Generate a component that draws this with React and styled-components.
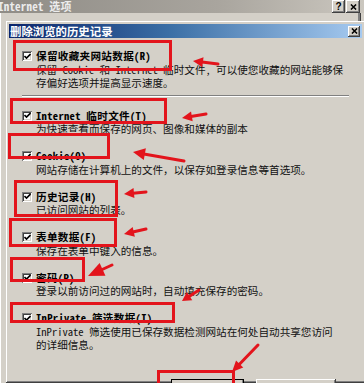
import React from 'react';
import styled, { createGlobalStyle } from 'styled-components';

const GlobalStyle = createGlobalStyle`
  html, body {
    margin: 0;
    padding: 0;
    background: #d4d0c8;
  }
  body {
    overflow: hidden;
  }
`;

const FONT = `"Noto Sans Mono CJK SC", "Noto Sans CJK SC", "Liberation Mono", monospace`;
const RED = '#e3141c';

const raised = `
  box-shadow: inset -1px -1px #404040, inset 1px 1px #ffffff,
    inset -2px -2px #808080, inset 2px 2px #d4d0c8;
`;

const Screen = styled.div`
  position: relative;
  width: 364px;
  height: 383px;
  overflow: hidden;
  background: #d4d0c8;
  display: flex;
  flex-direction: column;
  font-family: ${FONT};
  color: #000;
`;

const OuterTitle = styled.div`
  flex: 0 0 13px;
  display: flex;
  align-items: center;
  justify-content: space-between;
  padding-right: 4px;
  background: linear-gradient(to right, #8f8c86, #a9a59e 60%, #cbc7bf);
`;

const OuterTitleText = styled.span`
  margin-left: -2px;
  color: #ececec;
  font-size: 11px;
  font-weight: bold;
  line-height: 13px;
  letter-spacing: 0.2px;
  white-space: nowrap;
`;

const CaptionGroup = styled.div`
  display: flex;
  gap: 1px;
`;

const CaptionButton = styled.span`
  width: ${p => p.$w}px;
  height: ${p => p.$h}px;
  background: #d4d0c8;
  ${raised}
  display: flex;
  align-items: center;
  justify-content: center;
  font-family: "Liberation Sans", sans-serif;
  font-size: 10px;
  font-weight: bold;
  line-height: 1;
`;

const OuterBody = styled.div`
  flex: 1;
  width: 361px;
  padding: 8px 5px 0 6px;
  box-sizing: border-box;
  box-shadow: inset 1px 0 #ffffff, inset -1px 0 #404040, inset -3px 0 #808080;
  display: flex;
  min-height: 0;
`;

const Dialog = styled.div`
  flex: 1;
  display: flex;
  flex-direction: column;
  padding: 3px 5px 0 3px;
  background: #d4d0c8;
  ${raised}
`;

const DialogTitle = styled.div`
  height: 14px;
  display: flex;
  align-items: center;
  justify-content: space-between;
  padding: 0 2px 0 1px;
  background: linear-gradient(to right, #0a246a, #3a6ea5 45%, #a6caf0);
`;

const DialogTitleText = styled.span`
  color: #ffffff;
  font-size: 11.4px;
  font-weight: bold;
  line-height: 14px;
  white-space: nowrap;
`;

const Content = styled.div`
  display: flex;
  flex-direction: column;
  padding: 11px 13px 0 13px;
  font-size: 10.6px;
  line-height: 13.5px;
`;

const Item = styled.div`
  display: grid;
  grid-template-columns: 10px 1fr;
  column-gap: 4px;
  margin-bottom: ${p => p.$gap}px;
`;

const Check = styled.span`
  width: 10px;
  height: 10px;
  margin-top: 2px;
  background: #ffffff;
  box-shadow: inset 1px 1px #808080, inset -1px -1px #ffffff,
    inset 2px 2px #404040, inset -2px -2px #d4d0c8;
  display: flex;
  align-items: center;
  justify-content: center;
`;

const Label = styled.span`
  font-weight: bold;
  white-space: nowrap;
  letter-spacing: 0.3px;
`;

const Desc = styled.span`
  grid-column: 2;
  white-space: nowrap;
  color: #111;
`;

const Separator = styled.div`
  height: 0;
  margin: 5px 0 12px 0;
  border-top: 1px solid #808080;
  border-bottom: 1px solid #ffffff;
  width: 327px;
`;

const ButtonRow = styled.div`
  display: flex;
  justify-content: flex-end;
  gap: 12px;
  padding-right: 13px;
  margin-top: ${p => p.$top}px;
`;

const Button = styled.div`
  width: ${p => p.$w}px;
  height: 23px;
  box-sizing: border-box;
  padding-top: 4px;
  text-align: center;
  font-size: 10.6px;
  background: #d4d0c8;
  ${raised}
  ${p => p.$default && `outline: 1px solid #000; outline-offset: -1px;`}
`;

const Overlay = styled.svg`
  position: absolute;
  left: 0;
  top: 0;
  pointer-events: none;
`;

const items = [
  {
    label: '保留收藏夹网站数据(R)',
    lines: ['保留 Cookie 和 Internet 临时文件, 可以使您收藏的网站能够保', '存偏好选项并提高显示速度。'],
    sep: true,
  },
  { label: 'Internet 临时文件(T)', lines: ['为快速查看而保存的网页、图像和媒体的副本'] },
  { label: 'Cookie(O)', lines: ['网站存储在计算机上的文件，以保存如登录信息等首选项。'] },
  { label: '历史记录(H)', lines: ['已访问网站的列表。'] },
  { label: '表单数据(F)', lines: ['保存在表单中键入的信息。'] },
  { label: '密码(P)', lines: ['登录以前访问过的网站时，自动填充保存的密码。'] },
  { label: 'InPrivate 筛选数据(I)', lines: ['InPrivate 筛选使用已保存数据检测网站在何处自动共享您访问', '的详细信息。'] },
];

// red annotation boxes, page coords of the stroke centre
const marks = [
  [14.5, 41.5, 156, 28],
  [11.5, 99.5, 154, 23],
  [9.5, 134.5, 99, 23],
  [15.5, 181.5, 101, 34],
  [10.5, 219.5, 105, 26],
  [11.5, 258.5, 72, 22],
  [11.5, 303.5, 162, 18],
  [158.5, 371.5, 75, 20],
];

// [tail, head, head length, head half width]
const arrows = [
  [[218, 64], [193, 61], 10, 5],
  [[206, 114], [182, 118], 10, 5],
  [[184, 161], [133, 152], 12, 6],
  [[146, 192], [124, 194], 10, 5],
  [[146, 229], [124, 234], 10, 5],
  [[112, 265], [88, 276], 16, 7],
  [[199, 290], [182, 301], 9, 5],
  [[258, 345], [232, 372], 11, 5],
];

function Tick() {
  return (
    <svg width="7" height="7" viewBox="0 0 7 7">
      <path d="M0.5 3 L2.5 5 L6.5 1" fill="none" stroke="#000" strokeWidth="1.6" />
    </svg>
  );
}

function Cross({ size = 7 }) {
  return (
    <svg width={size} height={size - 1} viewBox="0 0 8 7">
      <path d="M1 0.5 L7 6.5 M7 0.5 L1 6.5" stroke="#000" strokeWidth="1.7" />
    </svg>
  );
}

function Arrow({ from, to, len, wide }) {
  const [x1, y1] = from;
  const [x2, y2] = to;
  const d = Math.hypot(x2 - x1, y2 - y1);
  const ux = (x2 - x1) / d;
  const uy = (y2 - y1) / d;
  const bx = x2 - ux * len;
  const by = y2 - uy * len;
  const px = -uy;
  const py = ux;
  const pts = `${x2},${y2} ${bx + px * wide},${by + py * wide} ${bx - px * wide},${by - py * wide}`;
  return (
    <g>
      <line x1={x1} y1={y1} x2={bx + ux} y2={by + uy} stroke={RED} strokeWidth="3" strokeLinecap="round" />
      <polygon points={pts} fill={RED} />
    </g>
  );
}

export default function App() {
  return (
    <Screen>
      <GlobalStyle />
      <OuterTitle>
        <OuterTitleText>Internet 选项</OuterTitleText>
        <CaptionGroup>
          <CaptionButton $w={13} $h={13}>?</CaptionButton>
          <CaptionButton $w={14} $h={13}><Cross /></CaptionButton>
        </CaptionGroup>
      </OuterTitle>
      <OuterBody>
        <Dialog>
          <DialogTitle>
            <DialogTitleText>删除浏览的历史记录</DialogTitleText>
            <CaptionButton $w={12} $h={11}><Cross size={7} /></CaptionButton>
          </DialogTitle>
          <Content>
            {items.map((it, i) => (
              <React.Fragment key={it.label}>
                <Item $gap={it.sep || i === items.length - 1 ? 0 : 13.5}>
                  <Check><Tick /></Check>
                  <Label>{it.label}</Label>
                  {it.lines.map(l => (
                    <Desc key={l}>{l}</Desc>
                  ))}
                </Item>
                {it.sep && <Separator />}
              </React.Fragment>
            ))}
            <ButtonRow $top={27}>
              <Button $w={73} $default>删除(D)</Button>
              <Button $w={80}>取消</Button>
            </ButtonRow>
          </Content>
        </Dialog>
      </OuterBody>
      <Overlay width="364" height="383" viewBox="0 0 364 383">
        {marks.map(([x, y, w, h]) => (
          <rect key={`${x}-${y}`} x={x} y={y} width={w} height={h} fill="none" stroke={RED} strokeWidth="3" />
        ))}
        {arrows.map(([a, b, len, wide]) => (
          <Arrow key={`${a[0]}-${a[1]}`} from={a} to={b} len={len} wide={wide} />
        ))}
      </Overlay>
    </Screen>
  );
}
